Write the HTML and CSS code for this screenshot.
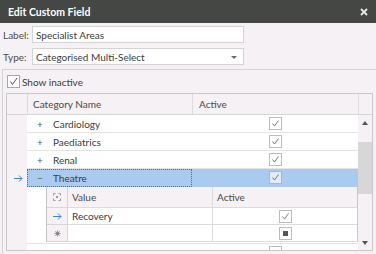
FILE: index.html
```html
<!DOCTYPE html>
<html>
<head>
  <meta charset="UTF-8" />
  <title>Edit Custom Field</title>
  <link rel="stylesheet" href="styles.css">
</head>
<body>
  <!-- Dialog title bar -->
  <div class="titlebar">
    <span class="title">Edit Custom Field</span>
    <svg class="close" width="8" height="8" viewBox="0 0 8 8"><path d="M1 1L7 7M7 1L1 7" stroke="#e8e8e8" stroke-width="1.8"/></svg>
  </div>

  <!-- Label / type fields -->
  <div class="form">
    <div class="field">
      <span class="field-label">Label:</span>
      <div class="input">Specialist Areas</div>
    </div>
    <div class="field">
      <span class="field-label">Type:</span>
      <div class="input select">Categorised Multi-Select<span class="caret"></span></div>
    </div>
  </div>

  <div class="panel">
    <div class="show-inactive">
      <svg class="check" width="13" height="13" viewBox="0 0 13 13"><rect x="0.5" y="0.5" width="12" height="12" fill="#fff" stroke="#a9a9a9"/><path d="M3.5 6.5L5.5 9.5L10 3" fill="none" stroke="#555" stroke-width="1"/></svg>
      <span>Show inactive</span>
    </div>

    <!-- Categories grid -->
    <div class="grid">
      <div class="grid-head">
        <div class="hcell"></div>
        <div class="hcell">Category Name</div>
        <div class="hcell">Active</div>
        <div class="hcell last"></div>
      </div>
      <div class="grid-body">
        <div class="rows">
          <div class="row">
            <div class="ind"></div>
            <div class="cell name"><span class="expander">+</span>Cardiology</div>
            <div class="cell active"><svg class="check" width="13" height="13" viewBox="0 0 13 13"><rect x="0.5" y="0.5" width="12" height="12" fill="#fff" stroke="#bdbdbd"/><path d="M3.5 6.5L5.5 9L9.5 3.5" fill="none" stroke="#7a7a7a"/></svg></div>
          </div>
          <div class="row">
            <div class="ind"></div>
            <div class="cell name"><span class="expander">+</span>Paediatrics</div>
            <div class="cell active"><svg class="check" width="13" height="13" viewBox="0 0 13 13"><rect x="0.5" y="0.5" width="12" height="12" fill="#fff" stroke="#bdbdbd"/><path d="M3.5 6.5L5.5 9L9.5 3.5" fill="none" stroke="#7a7a7a"/></svg></div>
          </div>
          <div class="row">
            <div class="ind"></div>
            <div class="cell name"><span class="expander">+</span>Renal</div>
            <div class="cell active"><svg class="check" width="13" height="13" viewBox="0 0 13 13"><rect x="0.5" y="0.5" width="12" height="12" fill="#fff" stroke="#bdbdbd"/><path d="M3.5 6.5L5.5 9L9.5 3.5" fill="none" stroke="#7a7a7a"/></svg></div>
          </div>
          <div class="row selected">
            <div class="ind">
              <svg width="9" height="7" viewBox="0 0 9 7"><path d="M0 3.5H8M5 0.5L8 3.5L5 6.5" fill="none" stroke="#3f83d6"/></svg>
            </div>
            <div class="cell name focused"><span class="expander">−</span>Theatre</div>
            <div class="cell active"><svg class="check" width="13" height="13" viewBox="0 0 13 13"><rect x="0.5" y="0.5" width="12" height="12" fill="#e2ecf8" stroke="#a3b6cf"/><path d="M3.5 6.5L5.5 9L9.5 3.5" fill="none" stroke="#6a7a90"/></svg></div>
          </div>

          <!-- Detail grid for Theatre -->
          <div class="detail-wrap">
            <div class="ind"></div>
            <div class="detail-area">
              <div class="detail">
                <div class="drow dhead">
                  <div class="dind">
                    <svg width="8" height="8" viewBox="0 0 8 8"><path d="M0.5 2.5V0.5H2.5M5.5 0.5H7.5V2.5M7.5 5.5V7.5H5.5M2.5 7.5H0.5V5.5" fill="none" stroke="#9a9a9a"/><rect x="3" y="3" width="2" height="2" fill="#9a9a9a"/></svg>
                  </div>
                  <div class="dcell">Value</div>
                  <div class="dcell last">Active</div>
                </div>
                <div class="drow">
                  <div class="dind">
                    <svg width="9" height="7" viewBox="0 0 9 7"><path d="M0 3.5H8M5 0.5L8 3.5L5 6.5" fill="none" stroke="#3f83d6"/></svg>
                  </div>
                  <div class="dcell">Recovery</div>
                  <div class="dcell last center"><svg class="check" width="13" height="13" viewBox="0 0 13 13"><rect x="0.5" y="0.5" width="12" height="12" fill="#fff" stroke="#bdbdbd"/><path d="M3.5 6.5L5.5 9L9.5 3.5" fill="none" stroke="#7a7a7a"/></svg></div>
                </div>
                <div class="drow">
                  <div class="dind">
                    <svg width="7" height="7" viewBox="0 0 7 7"><path d="M3.5 0V7M0 3.5H7M1 1L6 6M6 1L1 6" stroke="#a8a8a8" stroke-width="0.8"/><circle cx="3.5" cy="3.5" r="2" fill="#8a8a8a"/></svg>
                  </div>
                  <div class="dcell"></div>
                  <div class="dcell last center"><svg class="check" width="13" height="13" viewBox="0 0 13 13"><rect x="0.5" y="0.5" width="12" height="12" fill="#fff" stroke="#bdbdbd"/><rect x="4" y="4" width="5" height="5" fill="#555"/></svg></div>
                </div>
              </div>
            </div>
          </div>

          <div class="row">
            <div class="ind"></div>
            <div class="cell name"></div>
            <div class="cell active top"><svg class="check" width="13" height="13" viewBox="0 0 13 13"><rect x="0.5" y="0.5" width="12" height="12" fill="#fff" stroke="#bdbdbd"/></svg></div>
          </div>
        </div>

        <!-- Vertical scrollbar -->
        <div class="vscroll">
          <div class="sbtn"><span class="tri up"></span></div>
          <div class="track"><div class="thumb"></div></div>
          <div class="sbtn"><span class="tri down"></span></div>
        </div>
      </div>
    </div>
  </div>
</body>
</html>
```

FILE: styles.css
```css
/* Reset & base */
* {
  margin: 0;
  padding: 0;
  box-sizing: border-box;
}
body {
  width: 376px;
  height: 254px;
  overflow: hidden;
  background-color: #f5f1f4;
  font-family: Lato, 'Liberation Sans', sans-serif;
  font-size: 10px;
  color: #3c3c3c;
}
svg {
  display: block;
}

/* Title bar */
.titlebar {
  height: 23px;
  background-color: #454745;
  display: flex;
  align-items: center;
  justify-content: space-between;
  padding: 0 8px;
}
.title {
  font-weight: 700;
  font-size: 10.5px;
  color: #ffffff;
}

/* Label / type form */
.form {
  padding: 3px 0 0 3px;
}
.field {
  display: flex;
  align-items: center;
  height: 17px;
  margin-bottom: 5px;
}
.field:last-child {
  margin-bottom: 0;
}
.field-label {
  width: 29px;
  color: #4d4d4d;
}
.input {
  width: 212px;
  height: 17px;
  background-color: #ffffff;
  border: 1px solid #d3d3d3;
  padding-left: 3px;
  display: flex;
  align-items: center;
  position: relative;
}
.caret {
  position: absolute;
  right: 6px;
  top: 7px;
  border-left: 3px solid transparent;
  border-right: 3px solid transparent;
  border-top: 3px solid #6a6a6a;
}

/* Panel below separator */
.panel {
  margin: 4px 0 0 2px;
  border-top: 1px solid #d4d4d4;
  border-left: 1px solid #d4d4d4;
  height: 185px;
}
.show-inactive {
  display: flex;
  align-items: center;
  gap: 2px;
  padding: 5px 0 0 4px;
  height: 18px;
}

/* Grid */
.grid {
  margin: 5px 0 0 3px;
  width: 367px;
  height: 158px;
  border: 1px solid #c9c9c9;
  overflow: hidden;
  background-color: #f5f1f4;
}
.grid-head {
  display: grid;
  grid-template-columns: 21px 165px 166px 13px;
  height: 21px;
  border-bottom: 1px solid #d6d6d6;
}
.hcell {
  border-right: 1px solid #dcdcdc;
  padding-left: 5px;
  display: flex;
  align-items: center;
  color: #4a4a4a;
}
.hcell:nth-child(3) {
  padding-left: 6px;
}
.hcell.last {
  border-right: none;
}
.grid-body {
  display: flex;
}
.rows {
  width: 351px;
}
.row {
  display: grid;
  grid-template-columns: 20px 165px 166px;
  height: 18px;
}
.ind {
  background-color: #f5f1f4;
  display: flex;
  align-items: center;
  justify-content: center;
  padding-left: 2px;
}
.cell {
  background-color: #ffffff;
  border-bottom: 1px solid #e4e4e4;
  display: flex;
  align-items: center;
}
.expander {
  width: 26px;
  text-align: center;
  color: #555555;
}
.cell.active {
  justify-content: center;
}
.cell.active.top {
  align-items: flex-start;
  padding-top: 2px;
}
.row.selected .cell {
  background-color: #aacaf0;
  border-bottom-color: #aacaf0;
}
.cell.focused {
  outline: 1px dotted #4b6a96;
  outline-offset: -1px;
}

/* Detail (child) grid */
.detail-wrap {
  display: grid;
  grid-template-columns: 20px 331px;
}
.detail-area {
  background-color: #ffffff;
  padding-left: 19px;
  border-bottom: 1px solid #e4e4e4;
  padding-bottom: 1px;
}
.detail {
  border-left: 1px solid #c6c6c6;
  border-right: 1px solid #c6c6c6;
}
.drow {
  display: grid;
  grid-template-columns: 21px 145px 1fr;
  height: 17px;
}
.drow.dhead {
  height: 21px;
  background-color: #f5f1f4;
}
.dind {
  background-color: #f5f1f4;
  border-right: 1px solid #d6d6d6;
  border-bottom: 1px solid #d6d6d6;
  display: flex;
  align-items: center;
  justify-content: center;
}
.dcell {
  background-color: #ffffff;
  border-right: 1px solid #dcdcdc;
  border-bottom: 1px solid #dcdcdc;
  padding-left: 4px;
  display: flex;
  align-items: center;
}
.dhead .dcell {
  background-color: #f5f1f4;
  color: #4a4a4a;
}
.dcell.last {
  border-right: none;
}
.dcell.center {
  justify-content: center;
  padding-left: 0;
}

/* Scrollbar */
.vscroll {
  width: 14px;
  height: 135px;
  display: flex;
  flex-direction: column;
  background-color: #f5f1f4;
}
.sbtn {
  height: 15px;
  display: flex;
  align-items: center;
  justify-content: center;
}
.track {
  flex: 1;
  padding-top: 12px;
}
.thumb {
  height: 52px;
  background-color: #d7d7d7;
}
.tri {
  border-left: 3px solid transparent;
  border-right: 3px solid transparent;
}
.tri.up {
  border-bottom: 4px solid #555555;
}
.tri.down {
  border-top: 4px solid #555555;
}
```
